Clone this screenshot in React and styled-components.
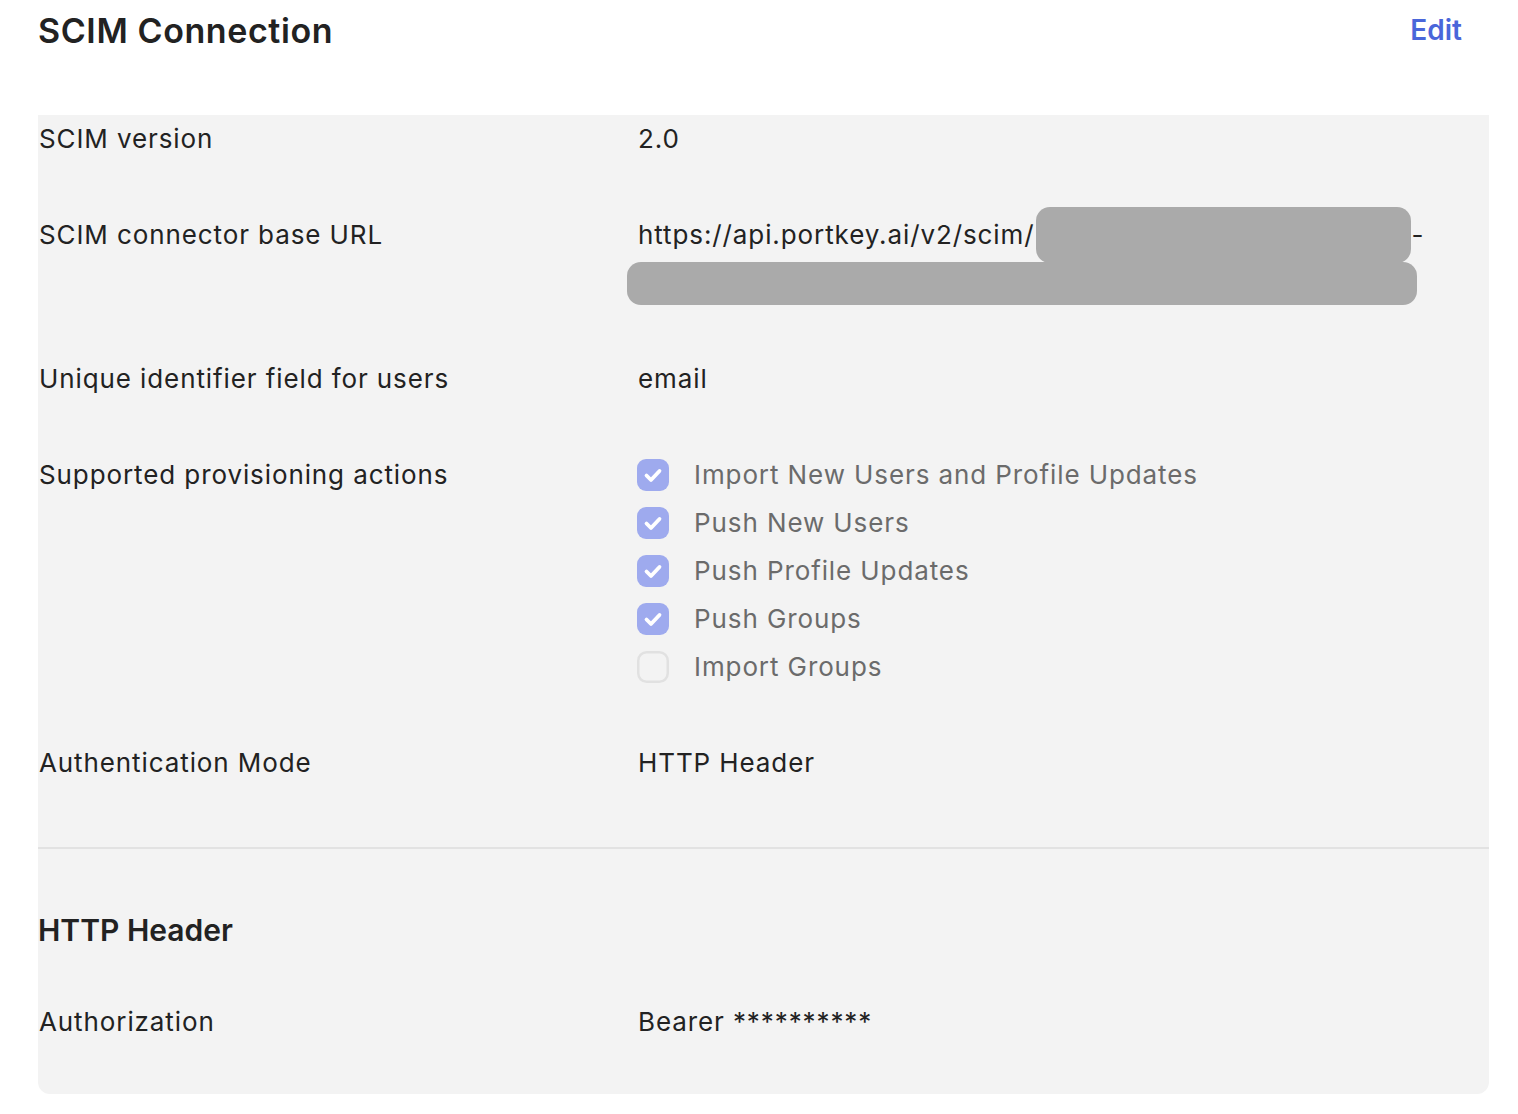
import React from "react";
import styled, { createGlobalStyle } from "styled-components";

const GlobalStyle = createGlobalStyle`
  body {
    margin: 0;
    background: #ffffff;
    font-family: Inter, "Noto Sans", "Liberation Sans", sans-serif;
    color: #222222;
  }
`;

const Page = styled.div`
  padding: 0 29px 0 38px;
`;

const Header = styled.header`
  display: flex;
  justify-content: space-between;
  align-items: center;
  height: 60px;
  margin-bottom: 55px;
  padding-right: 27px;
`;

const Title = styled.h1`
  margin: 0;
  font-size: 34px;
  font-weight: 600;
  letter-spacing: 0.6px;
  color: #222222;
`;

const EditLink = styled.a`
  font-size: 28px;
  font-weight: 600;
  color: #4a66da;
  text-decoration: none;
  cursor: pointer;
`;

const Panel = styled.section`
  background: #f3f3f3;
  border-radius: 0 0 12px 12px;
`;

const Block = styled.div`
  display: flex;
  flex-direction: column;
  gap: 48px;
  padding: ${(p) => p.$pad};
  border-bottom: ${(p) => (p.$divider ? "2px solid #e2e2e2" : "none")};
`;

const Row = styled.div`
  display: grid;
  grid-template-columns: 600px 1fr;
  font-size: 26px;
  letter-spacing: 0.9px;
  line-height: 48px;
`;

const Label = styled.div`
  padding-left: 1px;
  color: #222222;
`;

const Value = styled.div`
  color: #222222;
`;

const Line = styled.div`
  display: flex;
  align-items: center;
  height: 48px;
  white-space: nowrap;
`;

const Redacted = styled.span`
  flex: none;
  background: #aaaaaa;
  border-radius: 14px;
  width: ${(p) => p.$w}px;
  height: ${(p) => p.$h}px;
  margin-left: ${(p) => p.$ml || 0}px;
`;

const SubTitle = styled.h2`
  margin: 0;
  font-size: 30px;
  font-weight: 600;
  line-height: 40px;
  color: #222222;
`;

const CheckList = styled.div`
  display: flex;
  flex-direction: column;
`;

const CheckItem = styled.div`
  display: flex;
  align-items: center;
  gap: 25px;
  height: 48px;
  margin-left: -1px;
  color: #6b6b6b;
`;

const Box = ({ checked }) =>
  checked ? (
    <svg width="32" height="32" viewBox="0 0 32 32">
      <rect x="0" y="0" width="32" height="32" rx="9" fill="#9eaaee" />
      <path
        d="M9.5 16.5 L14 21 L22.5 12"
        fill="none"
        stroke="#ffffff"
        strokeWidth="3.8"
        strokeLinecap="round"
        strokeLinejoin="round"
      />
    </svg>
  ) : (
    <svg width="32" height="32" viewBox="0 0 32 32">
      <rect x="1.25" y="1.25" width="29.5" height="29.5" rx="8.5" fill="none" stroke="#e1e1e1" strokeWidth="2.5" />
    </svg>
  );

const actions = [
  { name: "Import New Users and Profile Updates", checked: true },
  { name: "Push New Users", checked: true },
  { name: "Push Profile Updates", checked: true },
  { name: "Push Groups", checked: true },
  { name: "Import Groups", checked: false },
];

export default function App() {
  return (
    <Page>
      <GlobalStyle />
      <Header>
        <Title>SCIM Connection</Title>
        <EditLink>Edit</EditLink>
      </Header>

      <Panel>
        <Block $pad="0 0 60px" $divider>
          <Row>
            <Label>SCIM version</Label>
            <Value>2.0</Value>
          </Row>
          <Row>
            <Label>SCIM connector base URL</Label>
            <Value>
              <Line>
                https://api.portkey.ai/v2/scim/
                <Redacted $w={375} $h={56} $ml={2} />-
              </Line>
              <Line>
                <Redacted $w={790} $h={43} $ml={-11} />
              </Line>
            </Value>
          </Row>
          <Row>
            <Label>Unique identifier field for users</Label>
            <Value>email</Value>
          </Row>
          <Row>
            <Label>Supported provisioning actions</Label>
            <CheckList>
              {actions.map((a) => (
                <CheckItem key={a.name}>
                  <Box checked={a.checked} />
                  {a.name}
                </CheckItem>
              ))}
            </CheckList>
          </Row>
          <Row>
            <Label>Authentication Mode</Label>
            <Value>HTTP Header</Value>
          </Row>
        </Block>

        <Block $pad="61px 0 48px">
          <SubTitle>HTTP Header</SubTitle>
          <Row>
            <Label>Authorization</Label>
            <Value>Bearer **********</Value>
          </Row>
        </Block>
      </Panel>
    </Page>
  );
}
